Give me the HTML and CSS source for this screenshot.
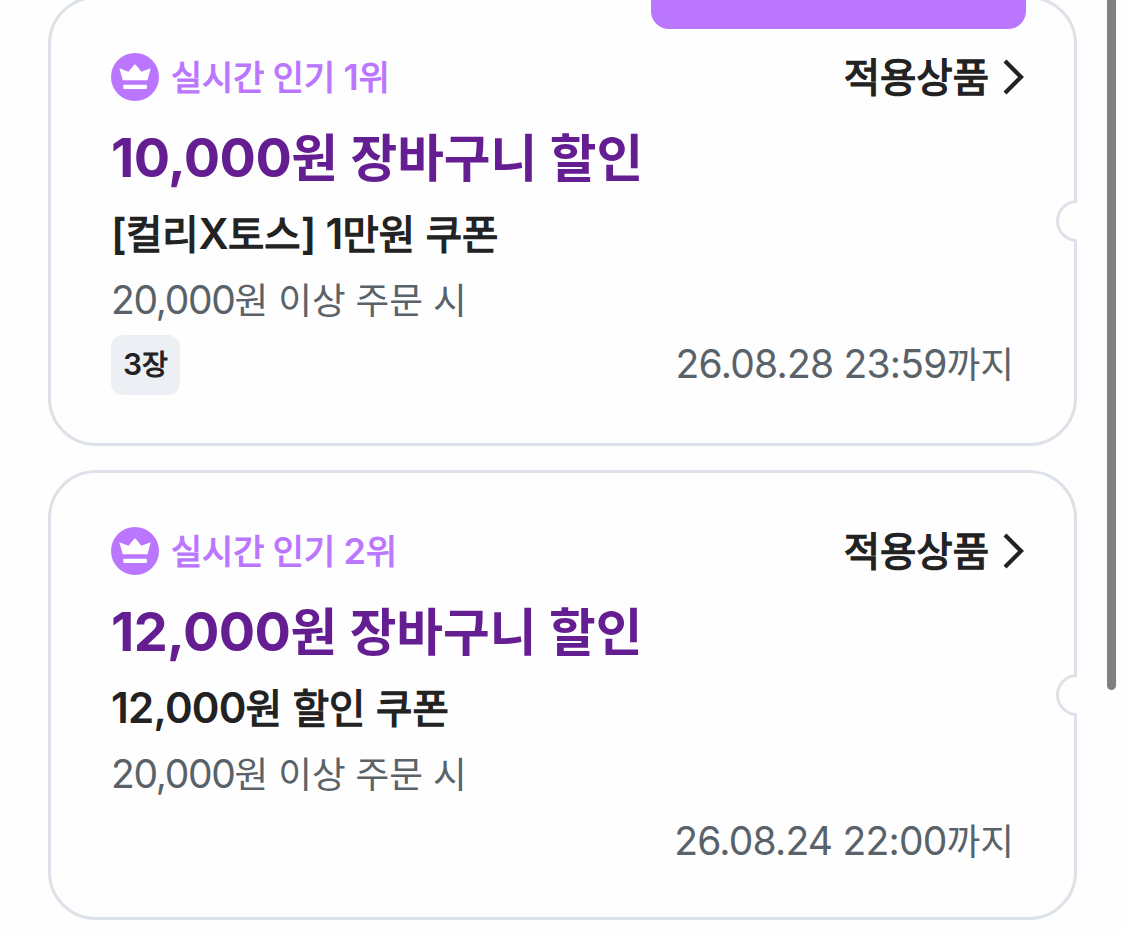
FILE: index.html
```html
<!DOCTYPE html>
<html lang="ko">
<head>
  <meta charset="UTF-8" />
  <meta name="viewport" content="width=device-width, initial-scale=1.0"/>
  <title>쿠폰</title>
  <link rel="stylesheet" href="styles.css">
</head>
<body>
  <div class="top-button"></div>
  <div class="scrollbar"></div>

  <div class="coupon-list">
    <div class="coupon">
      <div class="coupon-top">
        <div class="rank">
          <svg class="crown" viewBox="0 0 48 48">
            <circle cx="24" cy="24" r="24" fill="#bb76ff"/>
            <path d="M8.3 15.2L17.4 18.8L23.3 11.8Q24 11 24.7 11.8L30.4 18.8L39.7 15.2L36.5 27.2H11.8Z" fill="#fff"/>
            <rect x="12.3" y="31.7" width="23.6" height="4.4" rx="0.8" fill="#fff"/>
          </svg>
          <span class="rank-text"><span class="ko">실시간 인기 </span>1<span class="ko">위</span></span>
        </div>
        <a class="goods">
          <span class="ko">적용상품</span>
          <svg class="arrow" viewBox="0 0 22 36"><path d="M2 2L18 18L2 34"/></svg>
        </a>
      </div>
      <h2>10,000<span class="ko">원 장바구니 할인</span></h2>
      <h3>[<span class="ko">컬리</span>X<span class="ko">토스</span>] 1<span class="ko">만원 쿠폰</span></h3>
      <p class="condition">20,000<span class="ko">원 이상 주문 시</span></p>
      <div class="coupon-bottom">
        <span class="count">3<span class="ko">장</span></span>
        <span class="date">26.08.28 23:59<span class="ko">까지</span></span>
      </div>
      <div class="notch"></div>
    </div>

    <div class="coupon">
      <div class="coupon-top">
        <div class="rank">
          <svg class="crown" viewBox="0 0 48 48">
            <circle cx="24" cy="24" r="24" fill="#bb76ff"/>
            <path d="M8.3 15.2L17.4 18.8L23.3 11.8Q24 11 24.7 11.8L30.4 18.8L39.7 15.2L36.5 27.2H11.8Z" fill="#fff"/>
            <rect x="12.3" y="31.7" width="23.6" height="4.4" rx="0.8" fill="#fff"/>
          </svg>
          <span class="rank-text"><span class="ko">실시간 인기 </span>2<span class="ko">위</span></span>
        </div>
        <a class="goods">
          <span class="ko">적용상품</span>
          <svg class="arrow" viewBox="0 0 22 36"><path d="M2 2L18 18L2 34"/></svg>
        </a>
      </div>
      <h2>12,000<span class="ko">원 장바구니 할인</span></h2>
      <h3>12,000<span class="ko">원 할인 쿠폰</span></h3>
      <p class="condition">20,000<span class="ko">원 이상 주문 시</span></p>
      <div class="coupon-bottom no-count">
        <span class="date">26.08.24 22:00<span class="ko">까지</span></span>
      </div>
      <div class="notch"></div>
    </div>
  </div>
</body>
</html>
```
FILE: styles.css
```css
body {
  font-family: Inter, 'Noto Sans CJK KR', sans-serif;
  background: #fefefe;
  color: #222;
  margin: 0;
  height: 933px;
  overflow: hidden;
  position: relative;
}
h2, h3, p {
  margin: 0;
}
.ko {
  font-size: 0.94em;
  line-height: 0;
  letter-spacing: 0;
  word-spacing: -0.01em;
}
/* semi-bold hangul */
.rank .ko, .goods .ko, h3 .ko, .count .ko {
  font-weight: 400;
  -webkit-text-stroke: 0.035em currentColor;
}
.top-button {
  position: absolute;
  z-index: 1;
  top: -60px;
  left: 651px;
  width: 375px;
  height: 89px;
  border-radius: 18px;
  background: #bb76ff;
}
.scrollbar {
  position: absolute;
  top: -20px;
  right: 9px;
  width: 9px;
  height: 710px;
  border-radius: 5px;
  background: #808080;
}
.coupon-list {
  display: flex;
  flex-direction: column;
  gap: 24px;
  margin: -4px 48px 0;
}
.coupon {
  position: relative;
  box-sizing: border-box;
  height: 450px;
  padding: 54px 48px 0 60px;
  border: 3px solid #dde2e9;
  border-radius: 48px;
}
.coupon-top {
  display: flex;
  justify-content: space-between;
  align-items: center;
  height: 48px;
}
.rank {
  display: flex;
  align-items: center;
  gap: 12px;
  font-size: 36px;
  line-height: 46px;
  font-weight: 600;
  color: #bb76ff;
}
.rank .ko {
  word-spacing: -0.03em;
}
.crown {
  width: 48px;
  height: 48px;
}
.goods {
  display: flex;
  align-items: center;
  gap: 14px;
  padding-right: 1px;
  font-size: 42px;
  font-weight: 600;
}
.goods .ko {
  line-height: 48px;
  padding-top: 2px;
}
.arrow {
  width: 22px;
  height: 36px;
  fill: none;
  stroke: #222;
  stroke-width: 4.2;
}
h2 {
  margin-top: 21px;
  font-size: 54px;
  line-height: 72px;
  font-weight: 700;
  letter-spacing: -0.011em;
  color: #651e92;
}
h2 .ko {
  word-spacing: 0.01em;
}
h3 {
  margin-top: 12px;
  font-size: 42px;
  line-height: 56px;
  font-weight: 600;
  letter-spacing: -0.018em;
}
.condition {
  margin-top: 14px;
  font-size: 39px;
  line-height: 48px;
  letter-spacing: -0.034em;
  color: #596269;
}
.coupon-bottom {
  display: flex;
  justify-content: space-between;
  align-items: center;
  height: 60px;
  margin-top: 11px;
  padding-right: 12px;
}
.coupon-bottom.no-count {
  justify-content: flex-end;
  margin-top: 14px;
}
.count {
  box-sizing: border-box;
  width: 69px;
  height: 60px;
  border-radius: 12px;
  background: #eceff4;
  font-size: 30px;
  line-height: 58px;
  font-weight: 600;
  text-align: center;
}
.date {
  padding-bottom: 3px;
  font-size: 39px;
  line-height: 56px;
  letter-spacing: -0.02em;
  color: #596269;
}
/* half circle cut out of the right border */
.notch {
  position: absolute;
  top: 201px;
  right: -3px;
  box-sizing: border-box;
  width: 21px;
  height: 42px;
  border: 3px solid #dde2e9;
  border-right: none;
  border-radius: 21px 0 0 21px;
  background: #fefefe;
}
```
